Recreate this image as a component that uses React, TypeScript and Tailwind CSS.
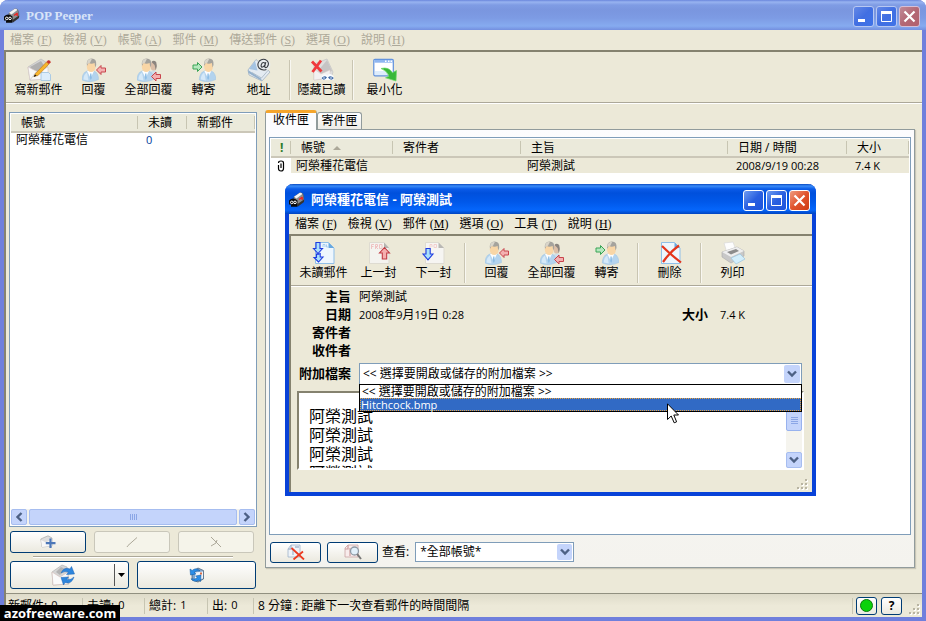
import { useState } from 'react';
import type { ReactNode } from 'react';
import clsx from 'clsx';

/* ═══ Icons ═══ */

const MailboxIcon = () => (
  <svg viewBox="0 0 16 16" className="h-4 w-4 shrink-0">
    <path d="M5 5 L11 .8 Q14 .5 14.5 4 L15 9 L9 13.5 L5 11 Z" fill="#8d8d8d" stroke="#555" strokeWidth=".6" />
    <path d="M5 4.8 L10.8 .8 Q12.6 .6 13.4 2 L7.5 6.5 Z" fill="#f4f4f4" />
    <path d="M8.5 12 L15 7.5 V10 L9 14.5 Z" fill="#333" />
    <path d="M10 7.5 L13.5 5 M13.2 5 V8" stroke="#e22" strokeWidth="1.4" fill="none" />
    <path d="M0 8.5 Q4 4.5 8.5 8.5 V14.8 H2 V12.5 H0 Z" fill="#0a0a0a" />
    <circle cx="2.8" cy="10.4" r="1.3" fill="#111" stroke="#fff" strokeWidth="1" />
    <circle cx="6" cy="10.4" r="1.3" fill="#111" stroke="#fff" strokeWidth="1" />
  </svg>
);

const Person = ({ x = 0 }: { x?: number }) => (
  <g transform={`translate(${x} 0)`}>
    <path d="M0 22 Q0 15 5 13 L12 13 Q16.5 15 16.5 21.5 Q8 25.5 0 22 Z" fill="#b3d3ee" stroke="#9dc2e2" strokeWidth=".5" />
    <path d="M1.5 21.5 Q1.5 16.5 5 14.5 L6.5 22.5 Z" fill="#d6e9f8" />
    <path d="M5 13 L8.6 20 L12 13 Z" fill="#fbfdff" />
    <path d="M8.2 15.5 H9.4 L9.8 20 L8.8 22 L7.8 20 Z" fill="#8cbde6" />
    <ellipse cx="9.2" cy="8.5" rx="4.4" ry="5.6" fill="#f9d6a6" />
    <path d="M5 8 Q3.8 .8 9.6 .6 Q14.8 .6 14.2 7 L13.2 9.5 L12.6 5 Q9 6.4 6.6 4.8 Z" fill="#a5a39d" />
    <path d="M5 6 Q5 .8 10 .8 L8 4.8 Z" fill="#d9d5ca" />
  </g>
);

const ArrowShape = ({ x, y, flip, green }: { x: number; y: number; flip?: boolean; green?: boolean }) => (
  <path
    transform={`translate(${x} ${y}) scale(${flip ? -1 : 1} 1)`}
    d="M.5 5 L5 .5 V3 H9.5 V7 H5 V9.5 Z"
    fill={green ? '#b5e8be' : '#f3b1b1'}
    stroke={green ? '#3aa457' : '#c8454c'}
    strokeWidth="1"
  />
);

const ReplyIcon = () => (
  <svg viewBox="0 0 24 24" className="h-6 w-6">
    <Person />
    <ArrowShape x={14} y={7} />
  </svg>
);

const ReplyAllIcon = () => (
  <svg viewBox="0 0 24 24" className="h-6 w-6">
    <path d="M12 19 Q13 12 17 12 Q21 13 20 20 Z" fill="#cfdfe9" />
    <ellipse cx="16.5" cy="8" rx="3" ry="4.6" fill="#dcbfa8" />
    <path d="M14.5 4 Q16.5 1.6 19.2 4 Q20.6 8 18.8 12.5 L17.6 7 Z" fill="#8b857f" />
    <Person />
    <ArrowShape x={14} y={13.5} />
  </svg>
);

const ForwardIcon = () => (
  <svg viewBox="0 0 24 24" className="h-6 w-6">
    <Person x={7.3} />
    <ArrowShape x={10.5} y={4} flip green />
  </svg>
);

const ComposeIcon = () => (
  <svg viewBox="0 0 24 24" className="h-6 w-6">
    <path d="M1 9 L14 1 L20 5 L21 21 L3 22 Z" fill="#d5d5d5" stroke="#bbb" strokeWidth=".7" />
    <path d="M3 9 L14 3 L18 9 L8 16 Z" fill="#b0b0b0" />
    <path d="M1 9 L11 14 L21 9 V21 L3 22 Z" fill="#f8f8f8" stroke="#d8c8c6" strokeWidth=".6" />
    <path d="M3 22 L9 14" stroke="#ccc" strokeWidth=".8" />
    <path d="M14 14.5 H21.5 L23.5 16.5 V22.5 H14 Z" fill="#dcedfb" stroke="#9cc3e2" strokeWidth=".8" />
    <path d="M7 18.5 L8.5 15.5 L19.5 4 L22 6 L11 17.5 Z" fill="#f8b52c" stroke="#b9731a" strokeWidth=".6" />
    <path d="M19.5 4 L21 2.2 Q23.6 1.8 23.8 4.4 L22 6 Z" fill="#c8342b" />
    <path d="M6.5 19 L8 16.4 L9.6 17.8 Z" fill="#111" />
  </svg>
);

const AddressIcon = () => (
  <svg viewBox="0 0 24 24" className="h-6 w-6">
    <path d="M1 12 L9 1.5 L23 14 L15 23 L2 17 Z" fill="#e4ebf2" stroke="#a5b4c2" strokeWidth=".8" />
    <path d="M1 12 L14 20.5 L15 23 L1.5 15 Z" fill="#93b0cc" />
    <path d="M2 11 L8 3 L10.5 12.5 Z" fill="#a4c3e2" />
    <path d="M5 14.5 L14.5 20 M14.5 20 L21 12.5" stroke="#a5b5c4" strokeWidth=".8" fill="none" />
    <ellipse cx="16.5" cy="7" rx="6.8" ry="6.2" fill="#e9edf0" />
    <path
      d="M18.8 4.2 L17.6 8.8 Q18.4 10.4 20.2 8.8 Q22.8 5.4 20 2.6 Q16 -.2 12.3 3 Q9.6 6.6 12 10 Q15 13 19.4 11.4 M18.2 5.8 Q17 3.4 15 5.2 Q13.2 8 15 9.2 Q16.8 9.2 18 6.8"
      fill="none"
      stroke="#3a3e44"
      strokeWidth="1.1"
    />
  </svg>
);

const HideReadIcon = () => (
  <svg viewBox="0 0 24 24" className="h-6 w-6">
    <path d="M4 6 L17 1 L23 14 L21 20 L4 22 Z" fill="#dedede" stroke="#c3c3c3" strokeWidth=".7" />
    <path d="M8 13 L17 2 L22 13 L12 17 Z" fill="#c6c4c4" />
    <path d="M4 11 L11 16 L20 12 V20 L4 22 Z" fill="#f3f1f1" stroke="#dccfcd" strokeWidth=".5" />
    <path d="M2 3.5 L11.5 13.5 M11 2.5 L2.5 14" stroke="#f0383b" strokeWidth="2.8" />
    <path d="M11 19 Q14 14.5 17.5 17.5 Q20 14.5 23.5 18 V22 H12 Z" fill="#fafcff" />
    <path d="M11.5 20 Q14.5 17 17 19.5 Q14 23.5 11.5 20 M18 19.5 Q20.5 17 23.8 20 Q21 23.5 18 19.5" fill="#3f69a6" />
    <path d="M13 20 H15 M20 20 H22" stroke="#d5e6f8" strokeWidth="1.2" />
  </svg>
);

const MinimizeIcon = () => (
  <svg viewBox="0 0 24 24" className="h-6 w-6">
    <rect x=".8" y="1.3" width="19.5" height="16.5" rx="1.2" fill="#fff" stroke="#5e90dc" strokeWidth="1.2" />
    <rect x="1.4" y="1.9" width="18.3" height="2.8" fill="#8fb6f0" />
    <path d="M12 3.3 H13.5 M15 3.3 H16.5 M17.5 3.3 H19" stroke="#fff" strokeWidth="1.4" />
    <path d="M2 13 H19 V17 H2 Z" fill="#deedfc" />
    <path d="M8 10.5 Q16 8.5 19.4 14.8 L23.5 12.5 L23 23 L12.5 19.8 L16 18.3 Q14 12.5 8 10.5 Z" fill="#38b838" stroke="#6cd866" strokeWidth=".7" />
  </svg>
);

const PageShape = ({ faded }: { faded?: boolean }) => (
  <g>
    <path
      d="M3.5 1.5 H16.5 L22 7 V22.5 H3.5 Z"
      fill={faded ? '#f6f5f2' : '#eef6fd'}
      stroke={faded ? '#dedbd1' : '#8fbfe8'}
    />
    <path d="M16.5 1.5 V7 H22 Z" fill={faded ? '#b9b8b4' : '#68a8e0'} />
  </g>
);

const UnreadIcon = () => (
  <svg viewBox="0 0 24 24" className="h-6 w-6">
    <PageShape />
    <path d="M11 6 V3.5 H13 V6 M14.5 3.5 V6 H16" stroke="#a5cdf0" fill="none" />
    <path
      d="M4 1.5 H8 V7.5 H10.5 L6 12.5 L1.5 7.5 H4 Z M4.5 13 L6 13.5 L8.2 12.5 V16 H11 L6.5 21 L2 16.5 H4.5 Z"
      fill="#a9e0fb"
      stroke="#1f3be0"
      strokeWidth="1.1"
    />
  </svg>
);

const PrevIcon = () => (
  <svg viewBox="0 0 24 24" className="h-6 w-6">
    <path d="M2.5 1.5 H17 L22 7 V22.5 H2.5 Z" fill="#f4f3ef" stroke="#dedbd1" />
    <path d="M17 1.5 V7 H22 Z" fill="#b5b4b0" />
    <path d="M4.5 8 V3.5 H7 M4.5 5.5 H6.5 M8.5 8 V3.5 H10.5 V5.5 H8.5 L11 8 M12.5 3.5 H15 V7.5 H12.5 Z" stroke="#efc3c2" fill="none" />
    <path d="M17.5 6.5 L22.5 12 H19.7 V18 H15.3 V12 H12.5 Z" fill="#f5aeae" stroke="#c03a42" strokeWidth="1.1" />
  </svg>
);

const NextIcon = () => (
  <svg viewBox="0 0 24 24" className="h-6 w-6">
    <PageShape faded />
    <path d="M8 7 V3.5 H10 V6 M12 3.5 H14.5 V6.5 H12 Z" stroke="#f1cfcd" fill="none" />
    <path d="M4 7.5 H8.2 V13 H11 L6 18.8 L1 13 H4 Z" fill="#a9e0fb" stroke="#1f3be0" strokeWidth="1.1" />
  </svg>
);

const DeleteIcon = () => (
  <svg viewBox="0 0 24 24" className="h-6 w-6">
    <PageShape />
    <path d="M4 5 Q12 13 23 21.5 M21 4.5 Q12 11 5 21" stroke="#e4351c" strokeWidth="2.2" fill="none" />
  </svg>
);

const PrinterIcon = () => (
  <svg viewBox="0 0 24 24" className="h-6 w-6">
    <path d="M3 2 L12 1 L15 9 L6 12 Z" fill="#fdfdfd" stroke="#d8d8d8" strokeWidth=".7" />
    <path d="M1 11 L16 6 L23 10 V15 L10 22 L1 16 Z" fill="#c8c8c8" stroke="#aaa" strokeWidth=".6" />
    <path d="M1 11 L16 6 L23 10 L10 16 Z" fill="#eee" />
    <path d="M6 11 L15 8 L18 10 L10 13.5 Z" fill="#8c8c8c" />
    <path d="M10 17 L19 13 L24 18 L15 23 Z" fill="#d3eefb" stroke="#9cc6df" strokeWidth=".7" />
  </svg>
);

const AddAccountIcon = () => (
  <svg viewBox="0 0 16 14" className="h-3.5 w-4">
    <path d="M.8 4 L8 .8 L12 3 V11 L2 12 Z" fill="#ddd" stroke="#a9a9a9" strokeWidth=".7" />
    <path d="M1 5 L6 7.5 L12 4 V11 L2 12 Z" fill="#f8f8f8" />
    <path d="M10.5 3.5 V13 M5.8 8.2 H15.5" stroke="#4c77b8" strokeWidth="2.2" />
  </svg>
);

const CheckMailIcon = () => (
  <svg viewBox="0 0 24 22" className="h-[22px] w-6">
    <path d="M1 8 L11 1 L16 3 L18 20 L2 21 Z" fill="#d5d5d5" stroke="#aaa" strokeWidth=".6" />
    <path d="M1 8 L9 13 L17 8 V20 L2 21 Z" fill="#fafafa" stroke="#d3bcb7" strokeWidth=".6" />
    <path d="M5 8 L10 3 L14 5 L9 11 Z" fill="#b3b3b3" />
    <path d="M10 9 Q13 2.5 19 5 L20.5 2.5 L23.5 10 L15.5 10.5 L17.5 8.2 Q14 6.5 10 9 Z" fill="#2d85dc" stroke="#1c62b4" strokeWidth=".5" />
    <path d="M23 13 Q20.5 20.5 14 18.5 L12.5 21 L10 13.5 L17.5 13 L15.8 15.2 Q20 16.5 23 13 Z" fill="#2d85dc" stroke="#1c62b4" strokeWidth=".5" />
  </svg>
);

const RefreshBoxIcon = () => (
  <svg viewBox="0 0 16 16" className="h-4 w-4">
    <path d="M3 5 L9 1 L14.5 3.5 V12 L9 15 L3 13 Z" fill="#7fa6cf" stroke="#42576f" strokeWidth=".7" />
    <path d="M6 5.5 L14 4.5 V11.5 L6 13 Z" fill="#f1f4f9" />
    <rect x="11" y="5.5" width="2" height="2" fill="#d86b45" />
    <path d="M1 2 L1.5 8 L7 7 L5.2 5.4 Q8 3 11 3.8 Q7 0 3.2 3.4 Z" fill="#2b8de8" stroke="#0c569e" strokeWidth=".5" />
    <path d="M12 8 L6.5 9 L8.3 10.6 Q6 13 2 11.8 Q5 16 10 13 L11.5 14.6 Z" fill="#2b8de8" stroke="#0c569e" strokeWidth=".5" />
  </svg>
);

const DeleteMessageIcon = () => (
  <svg viewBox="0 0 18 16" className="h-4 w-[18px]">
    <path d="M1 5 L4 1 H13 V13 H1 Z" fill="#eef3f9" stroke="#9fb2ca" strokeWidth=".8" />
    <path d="M4 1 V5 H1 M6 5 V11 M8 3 H12" stroke="#a9bacf" strokeWidth="1.3" fill="none" />
    <path d="M4.5 4 L17 15.5 M16 7.5 L6.5 15.5" stroke="#ec3b20" strokeWidth="1.8" />
  </svg>
);

const PreviewIcon = () => (
  <svg viewBox="0 0 18 16" className="h-4 w-[18px]">
    <path d="M1 4 L4 1 H14 V13 H1 Z" fill="#f8ecec" stroke="#c9a3a3" strokeWidth=".8" />
    <path d="M4 1 V5 H1 M6 4 V12" stroke="#cf9c9c" strokeWidth="1.2" fill="none" />
    <circle cx="10.5" cy="7" r="4" fill="#e2f0fa" stroke="#8f9aa5" strokeWidth="1.3" />
    <path d="M13.2 10.2 L17 15" stroke="#777" strokeWidth="2" />
  </svg>
);

const ClipIcon = () => (
  <svg viewBox="0 0 8 12" className="mx-auto h-3 w-2">
    <path d="M1.5 3 Q1.5 1 4 1 Q6.5 1 6.5 3 V8.5 Q6.5 11 4 11 Q1.5 11 1.5 8.5 V5 M4 3.5 V8" fill="none" stroke="#000" strokeWidth="1.2" />
  </svg>
);

const Chevron = ({ className }: { className?: string }) => (
  <svg viewBox="0 0 10 8" className={clsx('h-2 w-2.5', className)}>
    <path d="M1 1.5 L5 5.5 L9 1.5" fill="none" stroke="#4d6185" strokeWidth="2.4" />
  </svg>
);

const Grip = () => (
  <svg viewBox="0 0 12 12" className="h-3 w-3">
    {[[9, 1], [5, 5], [9, 5], [1, 9], [5, 9], [9, 9]].map(([x, y]) => (
      <g key={`${x}-${y}`}>
        <rect x={x + 1} y={y + 1} width="2" height="2" fill="#fff" />
        <rect x={x} y={y} width="2" height="2" fill="#b8b4a2" />
      </g>
    ))}
  </svg>
);

/* ═══ Window parts ═══ */

const CaptionButtons = ({ active }: { active?: boolean }) => {
  const base = 'flex h-[21px] w-[21px] items-center justify-center rounded-[3px] border';
  const blue = active
    ? 'border-white bg-linear-to-br from-[#6f9bf0] via-[#2a5fe0] to-[#1c55dc]'
    : 'border-[#b8c8f2] bg-linear-to-br from-[#6488e6] via-[#416fe2] to-[#3f73e8]';
  const red = active
    ? 'border-white bg-linear-to-br from-[#ee9a7f] via-[#e0532c] to-[#cf3b12]'
    : 'border-[#d5bfd6] bg-linear-to-br from-[#c08a97] via-[#b36875] to-[#b3606c]';
  return (
    <div className="flex gap-0.5">
      <button type="button" aria-label="minimize" className={clsx(base, blue)}>
        <svg viewBox="0 0 19 19" className="h-[19px] w-[19px]">
          <rect x="4" y="12" width="7" height="3" fill="#fff" />
        </svg>
      </button>
      <button type="button" aria-label="maximize" className={clsx(base, blue)}>
        <svg viewBox="0 0 19 19" className="h-[19px] w-[19px]">
          <path d="M4.5 5.5 H14.5 V14.5 H4.5 Z" fill="none" stroke="#fff" />
          <path d="M4 5.5 H15" stroke="#fff" strokeWidth="3" />
        </svg>
      </button>
      <button type="button" aria-label="close" className={clsx(base, red)}>
        <svg viewBox="0 0 19 19" className="h-[19px] w-[19px]">
          <path d="M4.5 4.5 L14.5 14.5 M14.5 4.5 L4.5 14.5" stroke="#fff" strokeWidth="2.2" />
        </svg>
      </button>
    </div>
  );
};

const MenuBar = ({ items, disabled }: { items: [string, string][]; disabled?: boolean }) => (
  <nav className={clsx('flex h-5 items-center gap-[11px] px-1.5', disabled && 'text-[#aca899]')}>
    {items.map(([label, key]) => (
      <button key={key} type="button" className="whitespace-nowrap leading-4">
        {label}{' '}
        <span className="font-['Liberation_Serif',serif]">
          (<u>{key}</u>)
        </span>
      </button>
    ))}
  </nav>
);

const ToolButton = ({ label, children }: { label: string; children: ReactNode }) => (
  <button type="button" className="flex w-[55px] flex-col items-center whitespace-nowrap leading-4">
    {children}
    {label}
  </button>
);

const ToolDivider = () => <div className="mx-[3px] h-10 w-0.5 self-center border-l border-r border-l-[#c9c5b2] border-r-[#f8f7f1]" />;

const Th = ({ children, className }: { children?: ReactNode; className?: string }) => (
  <th className={clsx('h-[18px] border-b-2 border-[#cbc7b8] bg-[#ebeadb] p-0 text-left font-normal', className)}>
    <div className="flex h-[13px] items-center border-r border-[#c7c5b2] pl-2.5 leading-[13px] whitespace-nowrap">{children}</div>
  </th>
);

const XpButton = ({ label, disabled, className, children }: { label: string; disabled?: boolean; className?: string; children: ReactNode }) => (
  <button
    type="button"
    aria-label={label}
    disabled={disabled}
    className={clsx(
      'flex items-center justify-center rounded-[3px] border',
      disabled ? 'border-[#c9c7ba] bg-[#f5f4ea]' : 'border-[#003c74] bg-linear-to-b from-white to-[#ebe9df]',
      className,
    )}
  >
    {children}
  </button>
);

const ScrollButton = ({ label, className }: { label: string; className?: string }) => (
  <button
    type="button"
    aria-label={label}
    className="flex h-4 w-4 shrink-0 items-center justify-center rounded-[2px] border border-[#a6bdf0] bg-[#c4d4fb]"
  >
    <Chevron className={className} />
  </button>
);

const num = "font-['Open_Sans',sans-serif] text-[11px]";

const StatusItem = ({ width, label, value }: { width: string; label: string; value: string }) => (
  <div className={clsx('mr-1 flex h-4 items-center gap-1 border-r border-[#c7c5b2] whitespace-nowrap', width)}>
    <span>{label}:</span>
    <span className={num}>{value}</span>
  </div>
);

/* ═══ Message window ═══ */

const PLACEHOLDER = '<< 選擇要開啟或儲存的附加檔案 >>';

const Field = ({ label, children }: { label: string; children?: ReactNode }) => (
  <div className="flex h-[18px] items-center">
    <span className="w-[55px] text-right text-[13px] font-bold">{label}</span>
    <div className="ml-2 flex-1">{children}</div>
  </div>
);

const MessageWindow = () => {
  const [attachment, setAttachment] = useState(PLACEHOLDER);

  return (
    <section className="absolute top-[184px] left-[281px] flex w-[531px] flex-col rounded-t-lg border-x-4 border-b-4 border-[#0842d8] bg-[#ece9d8]">
      <header className="-mx-1 flex h-[30px] items-center gap-1 rounded-t-lg bg-[linear-gradient(to_bottom,#0848c0_0px,#3a8cf8_2px,#0a5be8_5px,#0050dc_9px,#0058ea_18px,#0566fb_26px,#0044bf_30px)] pt-0.5 pr-1.5 pl-1">
        <MailboxIcon />
        <h2 className="ml-0.5 flex-1 text-[13px] font-bold whitespace-nowrap text-white">阿榮種花電信 - 阿榮測試</h2>
        <CaptionButtons active />
      </header>
      <MenuBar
        items={[['檔案', 'F'], ['檢視', 'V'], ['郵件', 'M'], ['選項', 'O'], ['工具', 'T'], ['說明', 'H']]}
      />
      <div className="border-t-2 border-l-2 border-[#85826f]">
        <div className="flex h-[50px] items-start border-b border-[#aca899] pt-[5px] pl-[5px] shadow-[0_1px_0_#fff]">
          <ToolButton label="未讀郵件"><UnreadIcon /></ToolButton>
          <ToolButton label="上一封"><PrevIcon /></ToolButton>
          <ToolButton label="下一封"><NextIcon /></ToolButton>
          <ToolDivider />
          <ToolButton label="回覆"><ReplyIcon /></ToolButton>
          <ToolButton label="全部回覆"><ReplyAllIcon /></ToolButton>
          <ToolButton label="轉寄"><ForwardIcon /></ToolButton>
          <ToolDivider />
          <ToolButton label="刪除"><DeleteIcon /></ToolButton>
          <ToolDivider />
          <ToolButton label="列印"><PrinterIcon /></ToolButton>
        </div>

        <div className="pt-0.5 pr-2.5 pl-[5px]">
          <Field label="主旨">阿榮測試</Field>
          <Field label="日期">
            <div className="flex items-center">
              <span className="flex-1">
                <span className={num}>2008</span>年<span className={num}>9</span>月<span className={num}>19</span>日{' '}
                <span className={num}>0:28</span>
              </span>
              <span className="mr-3 text-[13px] font-bold">大小</span>
              <span className={clsx(num, 'w-[82px]')}>7.4 K</span>
            </div>
          </Field>
          <Field label="寄件者" />
          <Field label="收件者" />

          <div className="mt-[3px] flex items-center">
            <label htmlFor="attachment" className="w-[55px] text-right text-[13px] font-bold whitespace-nowrap">
              附加檔案
            </label>
            <div className="relative ml-2 flex-1">
              <select
                id="attachment"
                value={attachment}
                onChange={(e) => setAttachment(e.target.value)}
                className="block h-[22px] w-full appearance-none border border-[#7f9db9] bg-white pl-[3px] leading-4"
              >
                <option>{PLACEHOLDER}</option>
                <option>Hitchcock.bmp</option>
              </select>
              <span className="pointer-events-none absolute top-0.5 right-0.5 flex h-[18px] w-4 items-center justify-center rounded-[2px] bg-[#c4d4fb]">
                <Chevron />
              </span>
              {/* opened drop-down list */}
              <ul role="listbox" aria-label="附加檔案" className="absolute top-[21px] right-0 left-0 z-10 border border-black bg-white">
                <li role="option" aria-selected="false" className="h-[13px] pl-0.5 leading-[13px]">
                  {PLACEHOLDER}
                </li>
                <li
                  role="option"
                  aria-selected="true"
                  className={clsx(num, 'h-[13px] border border-dotted border-[#e8a33d] bg-[#316ac5] leading-[11px] text-white')}
                >
                  Hitchcock.bmp
                </li>
              </ul>
              <svg viewBox="0 0 12 21" className="absolute top-10 left-[308px] z-20 h-[21px] w-3">
                <path d="M.5 .8 V16.5 L4.2 13 L7.2 19.8 L9.6 18.8 L6.8 12 H11.5 Z" fill="#fff" stroke="#000" />
              </svg>
            </div>
          </div>
        </div>

        <div className="mt-1.5 mr-2 ml-1.5 flex h-[79px] overflow-hidden border-2 border-t-[#85826f] border-r-white border-b-white border-l-[#85826f] bg-white">
          <div className="flex-1 px-2.5 pt-3.5 text-base leading-[19px]">
            <p>阿榮測試</p>
            <p>阿榮測試</p>
            <p>阿榮測試</p>
            <p>阿榮測試</p>
          </div>
          <div className="flex w-4 flex-col justify-between bg-[#f5f4ee]">
            <div className="flex h-[38px] flex-col items-center justify-end gap-px rounded-[2px] border border-[#98b2ee] bg-[#c4d4fb] pb-1.5">
              {[0, 1, 2, 3].map((i) => (
                <span key={i} className="h-px w-[7px] bg-[#8ba6e6]" />
              ))}
            </div>
            <ScrollButton label="scroll down" />
          </div>
        </div>
        <div className="flex h-[22px] items-end justify-end pr-1 pb-0.5">
          <Grip />
        </div>
      </div>
    </section>
  );
};

/* ═══ Main window ═══ */

const AccountsPane = () => (
  <aside className="flex w-[248px] shrink-0 flex-col">
    <div className="flex flex-1 flex-col border border-[#7f9db9] bg-white p-px">
      <table className="w-full table-fixed border-collapse">
        <thead>
          <tr>
            <Th className="w-[127px]">帳號</Th>
            <Th className="w-[49px]">未讀</Th>
            <Th>新郵件</Th>
          </tr>
        </thead>
        <tbody>
          <tr className="h-3.5 leading-[14px]">
            <td className="p-0 pl-[5px]">阿榮種花電信</td>
            <td className={clsx(num, 'p-0 pl-2 text-[#003c9c]')}>0</td>
            <td />
          </tr>
        </tbody>
      </table>
      <div className="mt-auto flex gap-0.5 bg-[#f3f2ec]">
        <ScrollButton label="scroll left" className="rotate-90" />
        <div className="flex h-4 flex-1 items-center justify-center gap-px rounded-[2px] border border-[#a6bdf0] bg-[#c4d4fb]">
          {[0, 1, 2, 3].map((i) => (
            <span key={i} className="h-1.5 w-px bg-[#8ba6e6]" />
          ))}
        </div>
        <ScrollButton label="scroll right" className="-rotate-90" />
      </div>
    </div>

    <div className="mt-1 grid grid-cols-3 gap-2 pr-[3px] pl-px">
      <XpButton label="新增帳號" className="h-[22px]"><AddAccountIcon /></XpButton>
      <XpButton label="編輯帳號" disabled className="h-[22px]">
        <svg viewBox="0 0 12 12" className="h-3 w-3"><path d="M1 11 L2 9.5 L11 1.5" fill="none" stroke="#aca899" /></svg>
      </XpButton>
      <XpButton label="刪除帳號" disabled className="h-[22px]">
        <svg viewBox="0 0 12 12" className="h-3 w-3"><path d="M1 1 L6 6 L11 11 M7 4 L6 7 L1 10" fill="none" stroke="#aca899" /></svg>
      </XpButton>
    </div>
    <hr className="mx-6 my-[3px] h-0.5 border-t border-b border-t-[#aca899] border-b-white" />
    <div className="grid grid-cols-2 gap-2 px-px">
      <div className="flex h-7 rounded-[3px] border border-[#003c74] bg-linear-to-b from-white to-[#ebe9df]">
        <button type="button" aria-label="檢查郵件" className="flex flex-1 items-center justify-center">
          <CheckMailIcon />
        </button>
        <button type="button" aria-label="檢查選項" className="my-0.5 flex w-[14px] items-center justify-center border-l border-[#555]">
          <svg viewBox="0 0 7 4" className="h-1 w-[7px]"><path d="M0 0 H7 L3.5 4 Z" /></svg>
        </button>
      </div>
      <XpButton label="重新整理" className="h-7"><RefreshBoxIcon /></XpButton>
    </div>
  </aside>
);

const InboxPane = () => (
  <div className="-mt-0.5 flex min-w-0 flex-1 flex-col">
    <div className="flex h-[19px] items-end" role="tablist">
      <button
        type="button"
        role="tab"
        aria-selected="true"
        className="z-10 -mb-px flex h-5 w-[52px] items-start justify-center rounded-t-[3px] border-x border-t-[3px] border-x-[#919b9c] border-t-[#f5a52c] bg-[#fcfcfe] leading-[14px] whitespace-nowrap"
      >
        收件匣
      </button>
      <button
        type="button"
        role="tab"
        aria-selected="false"
        className="flex h-[17px] w-[45px] items-center justify-center rounded-t-[3px] border border-b-0 border-[#919b9c] bg-linear-to-b from-white to-[#ecebe6] leading-4 whitespace-nowrap"
      >
        寄件匣
      </button>
    </div>
    <div className="flex flex-1 flex-col border border-[#919b9c] bg-linear-to-b from-[#fcfcfe] to-[#f4f3ee] px-[3px] pt-[7px] pb-1 shadow-[1px_1px_1px_#c9c6b6]">
      <div className="flex-1 border border-[#7f9db9] bg-white p-px">
        <table className="w-full table-fixed border-collapse">
          <thead>
            <tr>
              <Th className="w-5"><span className="-ml-px font-bold text-[#2a7a2a]">!</span></Th>
              <Th className="w-[102px]">
                帳號
                <svg viewBox="0 0 8 4" className="ml-2 h-1 w-2"><path d="M0 4 L4 0 L8 4 Z" fill="#aca899" /></svg>
              </Th>
              <Th className="w-32">寄件者</Th>
              <Th>主旨</Th>
              <Th className="w-[119px]">日期 / 時間</Th>
              <Th className="w-[62px]">大小</Th>
            </tr>
          </thead>
          <tbody>
            <tr className="h-[15px] bg-[#ece9d8] leading-[15px]">
              <td className="bg-white p-0"><ClipIcon /></td>
              <td className="p-0 pl-[5px]">阿榮種花電信</td>
              <td />
              <td className="p-0 pl-1.5">阿榮測試</td>
              <td className={clsx(num, 'p-0 pl-2')}>2008/9/19 00:28</td>
              <td className={clsx(num, 'p-0 pl-2')}>7.4 K</td>
            </tr>
          </tbody>
        </table>
      </div>
      <div className="mt-1.5 flex h-[22px] items-center">
        <XpButton label="刪除郵件" className="mr-1.5 ml-px h-[21px] w-[51px]"><DeleteMessageIcon /></XpButton>
        <XpButton label="預覽郵件" className="h-[21px] w-[51px]"><PreviewIcon /></XpButton>
        <label htmlFor="account-filter" className="mr-1.5 ml-1 whitespace-nowrap">查看:</label>
        <div className="relative w-[159px]">
          <select
            id="account-filter"
            className="block h-5 w-full appearance-none border border-[#7f9db9] bg-white pl-1 leading-4"
          >
            <option>*全部帳號*</option>
          </select>
          <span className="pointer-events-none absolute top-0.5 right-0.5 flex h-4 w-[15px] items-center justify-center rounded-[2px] bg-[#c4d4fb]">
            <Chevron />
          </span>
        </div>
      </div>
    </div>
  </div>
);

export default function App() {
  return (
    <div className="relative flex min-h-screen flex-col rounded-t-lg border-x-4 border-b-4 border-[#6f7fdc] bg-[#ece9d8] font-['Open_Sans','Noto_Sans_CJK_TC',sans-serif] text-xs text-black">
      <header className="-mx-1 flex h-[30px] shrink-0 items-center gap-1 rounded-t-lg bg-[linear-gradient(to_bottom,#6a86dc_0px,#98b3f0_2px,#7f9ce4_5px,#7a96df_10px,#7d9be4_18px,#86abf0_26px,#748fdf_30px)] pt-0.5 pr-1.5 pl-1">
        <MailboxIcon />
        <h1 className="ml-0.5 flex-1 font-['Liberation_Serif',serif] text-[13px] font-bold text-[#d8e4f8]">POP Peeper</h1>
        <CaptionButtons />
      </header>
      <MenuBar
        disabled
        items={[['檔案', 'F'], ['檢視', 'V'], ['帳號', 'A'], ['郵件', 'M'], ['傳送郵件', 'S'], ['選項', 'O'], ['說明', 'H']]}
      />

      <div className="flex flex-1 flex-col border-t-2 border-l-2 border-[#85826f]">
        <div className="flex h-[51px] shrink-0 items-start border-b border-[#aca899] pt-1.5 pl-[5px] shadow-[0_1px_0_#fff]">
          <ToolButton label="寫新郵件"><ComposeIcon /></ToolButton>
          <ToolButton label="回覆"><ReplyIcon /></ToolButton>
          <ToolButton label="全部回覆"><ReplyAllIcon /></ToolButton>
          <ToolButton label="轉寄"><ForwardIcon /></ToolButton>
          <ToolButton label="地址"><AddressIcon /></ToolButton>
          <ToolDivider />
          <ToolButton label="隱藏已讀"><HideReadIcon /></ToolButton>
          <ToolDivider />
          <ToolButton label="最小化"><MinimizeIcon /></ToolButton>
        </div>

        <main className="flex flex-1 gap-2 pt-[9px] pr-[7px] pl-[3px]">
          <div className="flex pb-1"><AccountsPane /></div>
          <div className="flex min-w-0 flex-1 pb-[25px]"><InboxPane /></div>
        </main>

        <footer className="flex h-6 shrink-0 items-center border-t border-[#919080] bg-linear-to-b from-[#dedbc9] via-[#ece9d8] to-[#ece9d8] pl-0.5">
          <StatusItem width="w-[75px]" label="新郵件" value="0" />
          <StatusItem width="w-[58px]" label="未讀" value="0" />
          <StatusItem width="w-[59px]" label="總計" value="1" />
          <StatusItem width="w-[42px]" label="出" value="0" />
          <span className="flex-1 whitespace-nowrap">8 分鐘 : 距離下一次查看郵件的時間間隔</span>
          <div className="mr-[3px] h-4 w-px bg-[#c7c5b2]" />
          <XpButton label="連線狀態" className="h-[18px] w-[21px]">
            <span className="h-[13px] w-[13px] rounded-full border border-[#0a7a0a] bg-[#0bd20b]" />
          </XpButton>
          <XpButton label="說明" className="mx-1 h-[18px] w-[21px] font-bold">?</XpButton>
          <div className="self-end pr-0.5 pb-0.5 pl-0.5"><Grip /></div>
        </footer>
      </div>

      <MessageWindow />

      {/* site tag over the lower left corner */}
      <div className="absolute -bottom-1 -left-1 h-4 w-[120px] bg-black text-center font-['Open_Sans',sans-serif] text-[13px] leading-4 font-bold text-white">
        azofreeware.com
      </div>
    </div>
  );
}
